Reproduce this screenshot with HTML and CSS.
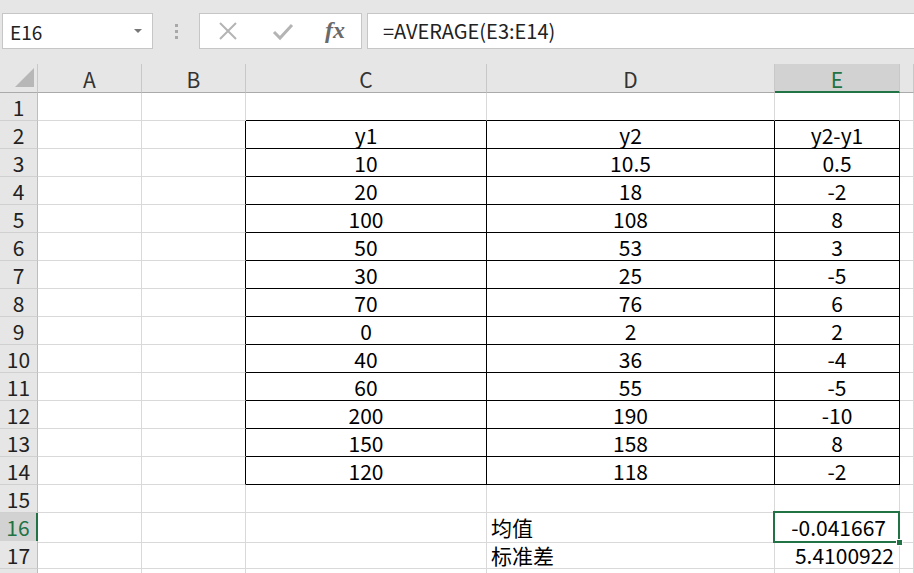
FILE: index.html
```html
<!DOCTYPE html>
<html>
<head>
  <meta charset="utf-8">
  <title>Book1 - Excel</title>
  <link rel="stylesheet" href="styles.css">
</head>
<body>
  <div class="toolbar">
    <div class="name-box">
      <span class="name-text">E16</span>
      <span class="name-arrow"></span>
    </div>
    <div class="dots"><i></i><i></i><i></i></div>
    <div class="fx-box">
      <svg class="fx-icon" width="22" height="22" viewBox="0 0 22 22">
        <path d="M3 3 L19 19 M19 3 L3 19" stroke="#b4b4b4" stroke-width="2" fill="none"/>
      </svg>
      <svg class="fx-icon" width="22" height="22" viewBox="0 0 22 22">
        <path d="M2 12 L8 18 L20 5" stroke="#b4b4b4" stroke-width="3" fill="none"/>
      </svg>
      <span class="fx-label">fx</span>
    </div>
    <div class="formula">=AVERAGE(E3:E14)</div>
  </div>

  <div class="sheet">
    <div class="row head">
      <div class="corner"><span class="tri"></span></div>
      <div>A</div><div>B</div><div>C</div><div>D</div><div class="cur">E</div><div></div>
    </div>
    <div class="row"><div class="rh">1</div><div></div><div></div><div class="tt"></div><div class="tt"></div><div class="tt"></div><div></div></div>
    <div class="row"><div class="rh">2</div><div></div><div class="tl"></div><div class="t c">y1</div><div class="t c">y2</div><div class="t c">y2-y1</div><div></div></div>
    <div class="row"><div class="rh">3</div><div></div><div class="tl"></div><div class="t c">10</div><div class="t c">10.5</div><div class="t c">0.5</div><div></div></div>
    <div class="row"><div class="rh">4</div><div></div><div class="tl"></div><div class="t c">20</div><div class="t c">18</div><div class="t c">-2</div><div></div></div>
    <div class="row"><div class="rh">5</div><div></div><div class="tl"></div><div class="t c">100</div><div class="t c">108</div><div class="t c">8</div><div></div></div>
    <div class="row"><div class="rh">6</div><div></div><div class="tl"></div><div class="t c">50</div><div class="t c">53</div><div class="t c">3</div><div></div></div>
    <div class="row"><div class="rh">7</div><div></div><div class="tl"></div><div class="t c">30</div><div class="t c">25</div><div class="t c">-5</div><div></div></div>
    <div class="row"><div class="rh">8</div><div></div><div class="tl"></div><div class="t c">70</div><div class="t c">76</div><div class="t c">6</div><div></div></div>
    <div class="row"><div class="rh">9</div><div></div><div class="tl"></div><div class="t c">0</div><div class="t c">2</div><div class="t c">2</div><div></div></div>
    <div class="row"><div class="rh">10</div><div></div><div class="tl"></div><div class="t c">40</div><div class="t c">36</div><div class="t c">-4</div><div></div></div>
    <div class="row"><div class="rh">11</div><div></div><div class="tl"></div><div class="t c">60</div><div class="t c">55</div><div class="t c">-5</div><div></div></div>
    <div class="row"><div class="rh">12</div><div></div><div class="tl"></div><div class="t c">200</div><div class="t c">190</div><div class="t c">-10</div><div></div></div>
    <div class="row"><div class="rh">13</div><div></div><div class="tl"></div><div class="t c">150</div><div class="t c">158</div><div class="t c">8</div><div></div></div>
    <div class="row"><div class="rh">14</div><div></div><div class="tl"></div><div class="t c">120</div><div class="t c">118</div><div class="t c">-2</div><div></div></div>
    <div class="row"><div class="rh">15</div><div></div><div></div><div></div><div></div><div></div><div></div></div>
    <div class="row"><div class="rh cur">16</div><div></div><div></div><div></div><div class="l">均值</div><div class="r sel neg">-0.041667</div><div></div></div>
    <div class="row"><div class="rh">17</div><div></div><div></div><div></div><div class="l">标准差</div><div class="r">5.4100922</div><div></div></div>
    <div class="row"><div class="rh"></div><div></div><div></div><div></div><div></div><div></div><div></div></div>
  </div>
</body>
</html>
```

FILE: styles.css
```css
html, body {
  margin: 0;
  background-color: #fff;
  font-family: "Noto Sans CJK SC", "Liberation Sans", sans-serif;
  color: #000;
  overflow: hidden;
}

.toolbar {
  height: 64px;
  background-color: #e6e6e6;
  display: flex;
  align-items: flex-start;
  padding-top: 13px;
  box-sizing: border-box;
}

.name-box {
  margin-left: 2px;
  width: 151px;
  height: 36px;
  background: #fff;
  border: 1px solid #c6c6c6;
  box-sizing: border-box;
  display: flex;
  align-items: center;
  justify-content: space-between;
  padding: 0 8px 0 7px;
}

.name-text {
  font-size: 19px;
  color: #222;
}

.name-arrow {
  width: 0;
  height: 0;
  border-left: 4px solid transparent;
  border-right: 4px solid transparent;
  border-top: 4px solid #777;
  margin-right: 2px;
}

.dots {
  width: 46px;
  height: 36px;
  display: flex;
  flex-direction: column;
  align-items: center;
  justify-content: center;
  gap: 3px;
}

.dots i {
  width: 3px;
  height: 3px;
  background: #a8a8a8;
}

.fx-box {
  width: 163px;
  height: 36px;
  background: #fff;
  border: 1px solid #c6c6c6;
  box-sizing: border-box;
  display: flex;
  align-items: center;
  padding-left: 17px;
  gap: 33px;
}

.fx-label {
  font-family: "Liberation Serif", serif;
  font-style: italic;
  font-weight: bold;
  font-size: 24px;
  color: #6a6a6a;
  margin-left: -2px;
  margin-top: -2px;
}

.formula {
  margin-left: 5px;
  flex: 1;
  height: 36px;
  background: #fff;
  border: 1px solid #c6c6c6;
  border-right: none;
  box-sizing: border-box;
  font-size: 20px;
  line-height: 34px;
  padding-left: 15px;
  color: #222;
}

.row {
  display: grid;
  grid-template-columns: 38px 104px 104px 241px 288px 125px 1fr;
  height: 28px;
}

.row > div {
  border-right: 1px solid #d9d9d9;
  border-bottom: 1px solid #d9d9d9;
  box-sizing: border-box;
  font-size: 21px;
  line-height: 29px;
  white-space: nowrap;
  overflow: hidden;
}

.row.head {
  height: 29px;
  background: #e6e6e6;
}

.row.head > div {
  text-align: center;
  color: #333;
  border-right-color: #c8c8c8;
  border-bottom-color: #aaaaaa;
  line-height: 31px;
}

.row.head > div.cur {
  background: #d2d2d2;
  color: #217346;
  border-bottom: 2px solid #217346;
}

.corner {
  position: relative;
}

.tri {
  position: absolute;
  left: 15px;
  top: 4px;
  width: 0;
  height: 0;
  border-left: 19px solid transparent;
  border-bottom: 19px solid #b7b7b7;
}

.row > div.rh {
  background: #e6e6e6;
  text-align: center;
  color: #222;
  border-right-color: #bdbdbd;
  border-bottom-color: #d0d0d0;
}

.row > div.rh.cur {
  background: #d2d2d2;
  color: #217346;
  border-right: 2px solid #217346;
}

.row > div.t {
  border-right-color: #000;
  border-bottom-color: #000;
}

.row > div.tl {
  border-right-color: #000;
}

.row > div.tt {
  border-bottom-color: #000;
}

.c {
  text-align: center;
}

.l {
  text-align: left;
  padding-left: 4px;
}

.r {
  text-align: right;
  padding-right: 5px;
}

.row > div.sel {
  position: relative;
  overflow: visible;
  padding-right: 13px;
}

.sel::after {
  content: "";
  position: absolute;
  left: -2px;
  top: -2px;
  right: -1px;
  bottom: -1px;
  border: 2px solid #217346;
}

.sel::before {
  content: "";
  position: absolute;
  right: -4px;
  bottom: -4px;
  width: 5px;
  height: 5px;
  background: #217346;
  border: 1px solid #fff;
  z-index: 1;
}
```
